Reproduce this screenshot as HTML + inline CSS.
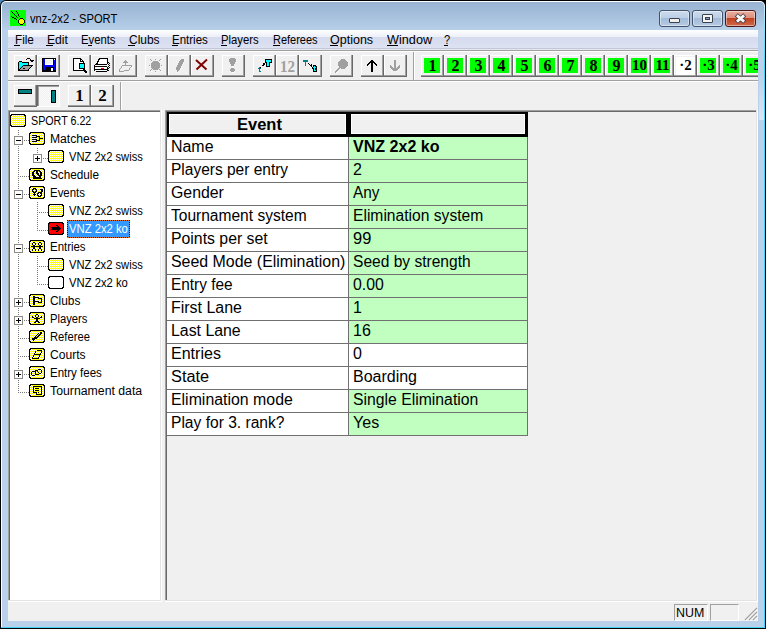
<!DOCTYPE html><html><head><meta charset="utf-8"><style>html,body{margin:0;padding:0;}body{width:766px;height:629px;overflow:hidden;position:relative;background:#000;font-family:"Liberation Sans",sans-serif;}div{box-sizing:border-box;}.btn{position:absolute;width:23px;height:22px;background:#f0f0f0;border-top:1px solid #fff;border-left:1px solid #fff;box-shadow:inset -1px -1px 0 #a0a0a0, 1px 1px 0 #696969;}</style></head><body>
<div style="position:absolute;left:0px;top:0px;width:6px;height:6px;background:#4d87b9;"></div>
<div style="position:absolute;left:0;top:0;width:766px;height:629px;border-radius:6px 6px 0 0;background:#000;overflow:hidden;"><div style="position:absolute;left:1px;top:1px;right:1px;bottom:1px;border-radius:5px 5px 0 0;background:#fff;"></div><div style="position:absolute;left:764px;top:5px;width:1px;bottom:1px;background:#44d4f6;"></div><div style="position:absolute;left:1px;top:627px;right:1px;height:1px;background:#44d4f6;"></div><div style="position:absolute;left:2px;top:2px;width:762px;height:625px;border-radius:4px 4px 0 0;background:linear-gradient(to bottom,#98b4d2 0px,#a6c0dd 14px,#b9d1ea 29px,#b9d1ea 100%);"></div></div>
<svg style="position:absolute;left:10px;top:10px" width="16" height="16" viewBox="0 0 16 16" shape-rendering="crispEdges"><rect width="16" height="16" fill="#00ff00"/><path d="M1 1h1v1h-1zM2 2h1v1h-1zM3 3h1v1h-1zM4 4h1v1h-1zM5 5h1v1h-1zM6 6h1v1h-1zM7 7h1v1h-1zM6 1h1v1h-1zM7 2h1v1h-1zM7 3h1v1h-1zM8 4h1v1h-1zM8 5h1v1h-1zM9 6h1v1h-1zM1 6h1v1h-1zM2 7h2v1h-2zM4 8h2v1h-2zM6 9h1v1h-1zM10 8h3v1h-3zM9 9h1v1h-1zM13 9h1v1h-1zM8 10h1v1h-1zM14 10h1v1h-1zM8 11h1v1h-1zM14 11h1v1h-1zM8 12h1v1h-1zM14 12h1v1h-1zM9 13h1v1h-1zM13 13h1v1h-1zM10 14h3v1h-3z" fill="#000"/><path d="M10 9h3v1h-3zM9 10h5v1h-5zM9 11h5v1h-5zM9 12h5v1h-5zM10 13h3v1h-3z" fill="#ffff00"/></svg>
<div style="position:absolute;left:30px;top:13px;white-space:pre;font-family:'Liberation Sans', sans-serif;font-size:12px;line-height:12px;color:#000;font-weight:normal;transform:scaleX(0.9306);transform-origin:0 0;">vnz-2x2 - SPORT</div>
<div style="position:absolute;left:659px;top:10px;width:31px;height:17px;border:1px solid #44536a;border-radius:3px;background:linear-gradient(to bottom,#cddcee 0%,#bccfe6 45%,#a3bcd9 50%,#b6cbe3 100%);box-shadow:inset 0 0 0 1px rgba(255,255,255,0.45);"></div>
<div style="position:absolute;left:692px;top:10px;width:31px;height:17px;border:1px solid #44536a;border-radius:3px;background:linear-gradient(to bottom,#cddcee 0%,#bccfe6 45%,#a3bcd9 50%,#b6cbe3 100%);box-shadow:inset 0 0 0 1px rgba(255,255,255,0.45);"></div>
<div style="position:absolute;left:725px;top:10px;width:31px;height:17px;border:1px solid #4d1616;border-radius:3px;background:linear-gradient(to bottom,#eaaf9f 0%,#dc9080 45%,#c2421f 50%,#cf6a4e 100%);box-shadow:inset 0 0 0 1px rgba(255,255,255,0.45);"></div>
<div style="position:absolute;left:669px;top:18px;width:11px;height:5px;background:#f0f0ea;border:1px solid #3a4250;border-radius:1px;"></div>
<div style="position:absolute;left:702px;top:14px;width:11px;height:9px;background:#f4f4f0;border:1px solid #3a4250;border-radius:1px;"></div>
<div style="position:absolute;left:705px;top:17px;width:5px;height:3px;background:#7f9bbf;border:1px solid #3a4250;"></div>
<svg style="position:absolute;left:733px;top:12px" width="15" height="13" viewBox="0 0 15 13"><path d="M3.3 2.9 L11.7 10.1 M11.7 2.9 L3.3 10.1" stroke="#3a3a44" stroke-width="4.4"/><path d="M3.9 3.4 L11.1 9.6 M11.1 3.4 L3.9 9.6" stroke="#f8f8f8" stroke-width="2.8"/></svg>
<div style="position:absolute;left:8px;top:30px;width:750px;height:591px;background:#f0f0f0;"></div>
<div style="position:absolute;left:8px;top:30px;width:750px;height:19px;background:linear-gradient(to bottom,#ffffff 0px,#f7f8fc 3px,#eceff8 7px,#d6dbee 7px,#d8ddef 12px,#dee3f4 18px);"></div>
<div style="position:absolute;left:8px;top:48px;width:750px;height:1px;background:#c2c7d9;"></div>
<div style="position:absolute;left:8px;top:49px;width:750px;height:1px;background:#e6e8ee;"></div>
<div style="position:absolute;left:8px;top:50px;width:750px;height:1px;background:#a0a0a0;"></div>
<div style="position:absolute;left:8px;top:51px;width:750px;height:1px;background:#fff;"></div>
<div style="position:absolute;left:14.5px;top:34px;white-space:pre;font-family:'Liberation Sans', sans-serif;font-size:12px;line-height:12px;color:#000;font-weight:normal;transform:scaleX(0.9771);transform-origin:0 0;">File</div>
<div style="position:absolute;left:14px;top:45px;width:6px;height:1px;background:#000;"></div>
<div style="position:absolute;left:46.5px;top:34px;white-space:pre;font-family:'Liberation Sans', sans-serif;font-size:12px;line-height:12px;color:#000;font-weight:normal;transform:scaleX(1.0103);transform-origin:0 0;">Edit</div>
<div style="position:absolute;left:46px;top:45px;width:7px;height:1px;background:#000;"></div>
<div style="position:absolute;left:80.7px;top:34px;white-space:pre;font-family:'Liberation Sans', sans-serif;font-size:12px;line-height:12px;color:#000;font-weight:normal;transform:scaleX(0.9404);transform-origin:0 0;">Events</div>
<div style="position:absolute;left:88px;top:45px;width:4px;height:1px;background:#000;"></div>
<div style="position:absolute;left:128.5px;top:34px;white-space:pre;font-family:'Liberation Sans', sans-serif;font-size:12px;line-height:12px;color:#000;font-weight:normal;transform:scaleX(0.9971);transform-origin:0 0;">Clubs</div>
<div style="position:absolute;left:128px;top:45px;width:7px;height:1px;background:#000;"></div>
<div style="position:absolute;left:172.3px;top:34px;white-space:pre;font-family:'Liberation Sans', sans-serif;font-size:12px;line-height:12px;color:#000;font-weight:normal;transform:scaleX(0.9583);transform-origin:0 0;">Entries</div>
<div style="position:absolute;left:172px;top:45px;width:6px;height:1px;background:#000;"></div>
<div style="position:absolute;left:221.4px;top:34px;white-space:pre;font-family:'Liberation Sans', sans-serif;font-size:12px;line-height:12px;color:#000;font-weight:normal;transform:scaleX(0.9396);transform-origin:0 0;">Players</div>
<div style="position:absolute;left:221px;top:45px;width:6px;height:1px;background:#000;"></div>
<div style="position:absolute;left:272.6px;top:34px;white-space:pre;font-family:'Liberation Sans', sans-serif;font-size:12px;line-height:12px;color:#000;font-weight:normal;transform:scaleX(0.9158);transform-origin:0 0;">Referees</div>
<div style="position:absolute;left:273px;top:45px;width:7px;height:1px;background:#000;"></div>
<div style="position:absolute;left:330.2px;top:34px;white-space:pre;font-family:'Liberation Sans', sans-serif;font-size:12px;line-height:12px;color:#000;font-weight:normal;transform:scaleX(1.0421);transform-origin:0 0;">Options</div>
<div style="position:absolute;left:330px;top:45px;width:8px;height:1px;background:#000;"></div>
<div style="position:absolute;left:387.2px;top:34px;white-space:pre;font-family:'Liberation Sans', sans-serif;font-size:12px;line-height:12px;color:#000;font-weight:normal;transform:scaleX(1.0565);transform-origin:0 0;">Window</div>
<div style="position:absolute;left:387px;top:45px;width:11px;height:1px;background:#000;"></div>
<div style="position:absolute;left:444.0px;top:34px;white-space:pre;font-family:'Liberation Sans', sans-serif;font-size:12px;line-height:12px;color:#000;font-weight:normal;transform:scaleX(0.9271);transform-origin:0 0;">?</div>
<div style="position:absolute;left:444px;top:45px;width:4px;height:1px;background:#000;"></div>
<div style="position:absolute;left:8px;top:80px;width:750px;height:1px;background:#a0a0a0;"></div>
<div style="position:absolute;left:8px;top:81px;width:750px;height:1px;background:#fff;"></div>
<div style="position:absolute;left:14px;top:55px;width:23px;height:22px;background:#f0f0f0;box-shadow:inset -1px -1px 0 #696969, inset -2px -2px 0 #a0a0a0, inset 1px 1px 0 #fff;"><svg style="position:absolute;left:0;top:0" width="23" height="22" viewBox="0 0 23 22" shape-rendering="crispEdges"><path d="M13 3h3v1h-3zM12 4h1v1h-1zM16 4h1v1h-1zM16 5h4v1h-4zM17 6h2v1h-2zM5 6h3v1h-3zM4 7h1v1h-1zM8 7h7v1h-7zM4 8h1v1h-1zM14 8h1v1h-1zM4 9h1v1h-1zM14 9h1v1h-1zM4 10h1v1h-1zM9 10h10v1h-10zM4 11h1v1h-1zM8 11h1v1h-1zM17 11h1v1h-1zM4 12h1v1h-1zM7 12h1v1h-1zM16 12h1v1h-1zM4 13h1v1h-1zM6 13h1v1h-1zM9 13h2v1h-2zM15 13h1v1h-1zM4 14h2v1h-2zM14 14h1v1h-1zM4 15h11v1h-11z" fill="#000"/><path d="M5 7h3v1h-3zM5 8h9v1h-9zM5 9h9v1h-9zM5 10h4v1h-4zM5 11h3v1h-3zM5 12h2v1h-2zM5 13h1v1h-1z" fill="#00ffff"/><path d="M9 11h8v1h-8zM8 12h8v1h-8zM7 13h2v1h-2zM11 13h4v1h-4zM6 14h8v1h-8z" fill="#a0a0a0"/></svg></div>
<div style="position:absolute;left:37px;top:55px;width:23px;height:22px;background:#f0f0f0;box-shadow:inset -1px -1px 0 #696969, inset -2px -2px 0 #a0a0a0, inset 1px 1px 0 #fff;"><svg style="position:absolute;left:0;top:0" width="23" height="22" viewBox="0 0 23 22" shape-rendering="crispEdges"><path d="M5 3h14v14H5z" fill="#000"/><path d="M6 4h2v11H6zM17 5h1v10h-1zM8 10h9v2H8z" fill="#0000ff"/><path d="M8 4h8v6H8z" fill="#fff"/><path d="M9 5h6v4H9z" fill="#f0f0f0"/><path d="M14 13h2v3h-2z" fill="#fff"/><path d="M17 4h1v1h-1z" fill="#fff"/></svg></div>
<div style="position:absolute;left:68px;top:55px;width:23px;height:22px;background:#f0f0f0;box-shadow:inset -1px -1px 0 #696969, inset -2px -2px 0 #a0a0a0, inset 1px 1px 0 #fff;"><svg style="position:absolute;left:0;top:0" width="23" height="22" viewBox="0 0 23 22" shape-rendering="crispEdges"><path d="M5 3h8v1h1v1h1v1h1v10H5z" fill="#000"/><path d="M6 4h7v1h1v1h1v9H6z" fill="#fff"/><path d="M12 4h1v2h2v1h-3z" fill="#000"/><path d="M11 8h6v6h-6z" fill="#000"/><path d="M12 9h4v4h-4z" fill="#00ffff"/><path d="M16 14h1v1h1v1h1v2h-2v-1h-1z" fill="#000"/></svg></div>
<div style="position:absolute;left:91px;top:55px;width:23px;height:22px;background:#f0f0f0;box-shadow:inset -1px -1px 0 #696969, inset -2px -2px 0 #a0a0a0, inset 1px 1px 0 #fff;"><svg style="position:absolute;left:0;top:0" width="23" height="22" viewBox="0 0 23 22" shape-rendering="crispEdges"><path d="M8 3h9v5h-1V4H9v1H8v2H7v2H6v1H5V8h1V6h1V4h1z" fill="#000"/><path d="M9 4h7v5H7V7h1V5h1z" fill="#fff"/><path d="M4 9h12v1H4zM3 10h1v6H3zM4 11h12v1H4zM4 14h12v1H4zM5 16h11v1H5zM16 12h1v4h-1z" fill="#000"/><path d="M4 10h12v1H4zM4 12h12v2H4zM5 15h11v1H5z" fill="#fff"/><path d="M10 13h3v1h-3z" fill="#ff0000"/><path d="M17 7h1v1h-1zM18 8h1v1h-1zM17 9h1v1h-1zM18 10h1v1h-1zM17 11h1v1h-1zM18 12h1v1h-1zM17 13h1v1h-1zM16 15h1v1h-1zM17 15h1v1h-1zM16 8h1v1h-1z" fill="#000"/></svg></div>
<div style="position:absolute;left:114px;top:55px;width:23px;height:22px;background:#f0f0f0;box-shadow:inset -1px -1px 0 #696969, inset -2px -2px 0 #a0a0a0, inset 1px 1px 0 #fff;"><svg style="position:absolute;left:0;top:0" width="23" height="22" viewBox="0 0 23 22" shape-rendering="crispEdges"><path d="M11 5h1v5h-1zM10 6h3v1h-3zM9 7h5v1H9z" fill="#a0a0a0"/><path d="M8 10h10v2h-1v1h-1v2h-1v1h-5v1H5v-3h1v-1h1v-2h1z" fill="#a0a0a0"/><path d="M8 11h9v1h-1v1h-1v2h-5v1H6v-2h1v-1h1z" fill="#f0f0f0"/><path d="M18 12h1v1h-1zM10 17h1v1h-1zM15 16h1v1h-1z" fill="#fff"/></svg></div>
<div style="position:absolute;left:145px;top:55px;width:23px;height:22px;background:#f0f0f0;box-shadow:inset -1px -1px 0 #696969, inset -2px -2px 0 #a0a0a0, inset 1px 1px 0 #fff;"><svg style="position:absolute;left:0;top:0" width="23" height="22" viewBox="0 0 23 22" shape-rendering="crispEdges"><path d="M8 6h5v1h-5zM7 7h7v1h-7zM6 8h9v1h-9zM6 9h9v1h-9zM6 10h9v1h-9zM6 11h9v1h-9zM6 12h9v1h-9zM7 13h7v1h-7zM8 14h5v1h-5zM10 4h1v1h-1zM4 10h1v1h-1zM16 10h1v1h-1zM10 16h1v1h-1zM5 4h1v1h-1zM6 5h1v1h-1zM15 4h1v1h-1zM14 5h1v1h-1zM5 15h1v1h-1zM6 14h1v1h-1zM15 15h1v1h-1zM14 14h1v1h-1z" fill="#a0a0a0"/><path d="M11 5h1v1h-1zM5 11h1v1h-1zM17 11h1v1h-1zM11 17h1v1h-1zM13 15h1v1h-1zM15 13h1v1h-1zM6 16h1v1h-1zM16 16h1v1h-1zM16 5h1v1h-1z" fill="#fff"/></svg></div>
<div style="position:absolute;left:168px;top:55px;width:23px;height:22px;background:#f0f0f0;box-shadow:inset -1px -1px 0 #696969, inset -2px -2px 0 #a0a0a0, inset 1px 1px 0 #fff;"><svg style="position:absolute;left:0;top:0" width="23" height="22" viewBox="0 0 23 22" shape-rendering="crispEdges"><path d="M13 4h3v1h-3zM12 5h4v1h-4zM11 6h5v1h-5zM11 7h4v1h-4zM10 8h5v1h-5zM10 9h4v1h-4zM9 10h5v1h-5zM9 11h4v1h-4zM8 12h5v1h-5zM8 13h4v1h-4zM8 14h4v1h-4zM9 15h2v1h-2zM9 16h1v1h-1z" fill="#a0a0a0"/><path d="M16 5h1v1h-1zM15 8h1v1h-1zM13 11h1v1h-1zM12 14h1v1h-1zM9 17h1v1h-1z" fill="#fff"/></svg></div>
<div style="position:absolute;left:191px;top:55px;width:23px;height:22px;background:#f0f0f0;box-shadow:inset -1px -1px 0 #696969, inset -2px -2px 0 #a0a0a0, inset 1px 1px 0 #fff;"><svg style="position:absolute;left:0;top:0" width="23" height="22" viewBox="0 0 23 22"><path d="M5 5L15.5 14.5M16 4.5L5.5 14.5" stroke="#800000" stroke-width="1.9"/></svg></div>
<div style="position:absolute;left:222px;top:55px;width:23px;height:22px;background:#f0f0f0;box-shadow:inset -1px -1px 0 #696969, inset -2px -2px 0 #a0a0a0, inset 1px 1px 0 #fff;"><svg style="position:absolute;left:0;top:0" width="23" height="22" viewBox="0 0 23 22" shape-rendering="crispEdges"><path d="M8 3h5v1h-5zM7 4h7v1h-7zM7 5h7v1h-7zM7 6h7v1h-7zM8 7h5v1h-5zM8 8h5v1h-5zM9 9h3v1h-3zM9 10h3v1h-3zM9 13h3v1h-3zM8 14h5v1h-5zM8 15h5v1h-5zM9 16h3v1h-3z" fill="#a0a0a0"/><path d="M10 11h2v1h-2zM10 17h2v1h-2zM14 5h1v1h-1z" fill="#fff"/></svg></div>
<div style="position:absolute;left:253px;top:55px;width:23px;height:22px;background:#f0f0f0;box-shadow:inset -1px -1px 0 #696969, inset -2px -2px 0 #a0a0a0, inset 1px 1px 0 #fff;"><svg style="position:absolute;left:0;top:0" width="23" height="22" viewBox="0 0 23 22" shape-rendering="crispEdges"><path d="M12 4h7v1h-7zM12 5h1v1h-1zM18 5h1v1h-1zM12 6h1v1h-1zM18 6h1v1h-1zM12 7h2v1h-2zM16 7h3v1h-3zM13 8h1v1h-1zM16 8h1v1h-1zM13 9h1v1h-1zM16 9h1v1h-1zM13 10h1v1h-1zM16 10h1v1h-1zM13 11h4v1h-4zM10 8h2v1h-2zM10 9h2v1h-2zM10 10h1v1h-1zM9 10h1v1h-1zM7 12h1v1h-1z" fill="#000"/><path d="M13 5h5v1h-5zM13 6h5v1h-5zM14 7h2v1h-2zM14 8h2v1h-2zM14 9h2v1h-2zM14 10h2v1h-2z" fill="#00ffff"/><path d="M6 12h1v1h-1zM5 13h3v1h-3zM6 14h1v1h-1zM6 15h1v1h-1zM6 16h2v1h-2z" fill="#008080"/></svg></div>
<div style="position:absolute;left:276px;top:55px;width:23px;height:22px;background:#f0f0f0;box-shadow:inset -1px -1px 0 #696969, inset -2px -2px 0 #a0a0a0, inset 1px 1px 0 #fff;"><svg style="position:absolute;left:0;top:0" width="23" height="22" viewBox="0 0 23 22"><text x="19" y="17" font-family="Liberation Serif" font-size="16.5" font-weight="bold" fill="#a0a0a0" text-anchor="end" textLength="15" lengthAdjust="spacingAndGlyphs">12</text></svg></div>
<div style="position:absolute;left:299px;top:55px;width:23px;height:22px;background:#f0f0f0;box-shadow:inset -1px -1px 0 #696969, inset -2px -2px 0 #a0a0a0, inset 1px 1px 0 #fff;"><svg style="position:absolute;left:0;top:0" width="23" height="22" viewBox="0 0 23 22" shape-rendering="crispEdges"><path d="M4 5h5v1h-5zM4 6h5v1h-5zM6 7h1v1h-1zM6 8h1v1h-1zM6 9h1v1h-1zM6 10h1v1h-1z" fill="#008080"/><path d="M9 8h1v1h-1zM10 9h1v1h-1zM11 10h2v1h-2zM12 11h1v1h-1zM12 9h1v1h-1zM14 10h3v1h-3zM14 11h1v1h-1zM16 11h2v1h-2zM13 12h1v1h-1zM17 12h1v1h-1zM13 13h2v1h-2zM16 13h2v1h-2zM14 14h1v1h-1zM16 14h2v1h-2zM14 15h1v1h-1zM17 15h1v1h-1zM14 16h4v1h-4z" fill="#000"/><path d="M15 11h1v1h-1zM14 12h3v1h-3zM15 13h1v1h-1zM15 14h1v1h-1zM15 15h2v1h-2z" fill="#00ffff"/></svg></div>
<div style="position:absolute;left:330px;top:55px;width:23px;height:22px;background:#f0f0f0;box-shadow:inset -1px -1px 0 #696969, inset -2px -2px 0 #a0a0a0, inset 1px 1px 0 #fff;"><svg style="position:absolute;left:0;top:0" width="23" height="22" viewBox="0 0 23 22" shape-rendering="crispEdges"><path d="M11 4h4v1h1v1h1v1h1v4h-1v1h-1v1h-1v1h-4v-1h-1v-1H9v-1H8V7h1V6h1V5h1z" fill="#a0a0a0"/><path d="M9 12h1v1h-1zM8 13h2v1H8zM7 14h2v1H7zM6 15h2v1H6zM5 16h2v1H5zM5 17h1v1H5zM9 11h1v1H9z" fill="#a0a0a0"/><path d="M6 17h1v1H6z" fill="#fff"/></svg></div>
<div style="position:absolute;left:361px;top:55px;width:23px;height:22px;background:#f0f0f0;box-shadow:inset -1px -1px 0 #696969, inset -2px -2px 0 #a0a0a0, inset 1px 1px 0 #fff;"><svg style="position:absolute;left:0;top:0" width="23" height="22" viewBox="0 0 23 22" shape-rendering="crispEdges"><path d="M10 5h2v12h-2z" fill="#000"/><path d="M9 6h4v1H9zM8 7h2v1H8zM12 7h2v1h-2zM7 8h2v1H7zM13 8h2v1h-2zM6 9h2v1H6zM14 9h2v1h-2zM6 10h1v1H6zM15 10h1v1h-1z" fill="#000"/></svg></div>
<div style="position:absolute;left:384px;top:55px;width:23px;height:22px;background:#f0f0f0;box-shadow:inset -1px -1px 0 #696969, inset -2px -2px 0 #a0a0a0, inset 1px 1px 0 #fff;"><svg style="position:absolute;left:0;top:0" width="23" height="22" viewBox="0 0 23 22" shape-rendering="crispEdges"><path d="M10 5h2v11h-2z" fill="#a0a0a0"/><path d="M9 15h4v1H9zM8 14h6v1H8zM7 13h3v1H7zM12 13h3v1h-3zM6 12h3v1H6zM13 12h3v1h-3zM6 11h2v1H6zM14 11h2v1h-2zM6 10h1v1H6zM15 10h1v1h-1z" fill="#a0a0a0"/><path d="M12 16h1v1h-1zM16 12h1v1h-1z" fill="#fff"/></svg></div>
<div style="position:absolute;left:413px;top:52px;width:1px;height:28px;background:#a0a0a0;"></div>
<div style="position:absolute;left:414px;top:52px;width:1px;height:28px;background:#fff;"></div>
<div style="position:absolute;left:421px;top:55px;width:23px;height:22px;background:#f0f0f0;box-shadow:inset -1px -1px 0 #696969, inset -2px -2px 0 #a0a0a0, inset 1px 1px 0 #fff;"><div style="position:absolute;left:3px;top:3px;width:16px;height:15px;background:#00ff00;"></div><div style="position:absolute;left:0;top:3px;width:23px;text-align:center;font-family:'Liberation Serif', serif;font-size:16px;line-height:15px;font-weight:bold;color:#000;">1</div></div>
<div style="position:absolute;left:444px;top:55px;width:23px;height:22px;background:#f0f0f0;box-shadow:inset -1px -1px 0 #696969, inset -2px -2px 0 #a0a0a0, inset 1px 1px 0 #fff;"><div style="position:absolute;left:3px;top:3px;width:16px;height:15px;background:#00ff00;"></div><div style="position:absolute;left:0;top:3px;width:23px;text-align:center;font-family:'Liberation Serif', serif;font-size:16px;line-height:15px;font-weight:bold;color:#000;">2</div></div>
<div style="position:absolute;left:467px;top:55px;width:23px;height:22px;background:#f0f0f0;box-shadow:inset -1px -1px 0 #696969, inset -2px -2px 0 #a0a0a0, inset 1px 1px 0 #fff;"><div style="position:absolute;left:3px;top:3px;width:16px;height:15px;background:#00ff00;"></div><div style="position:absolute;left:0;top:3px;width:23px;text-align:center;font-family:'Liberation Serif', serif;font-size:16px;line-height:15px;font-weight:bold;color:#000;">3</div></div>
<div style="position:absolute;left:490px;top:55px;width:23px;height:22px;background:#f0f0f0;box-shadow:inset -1px -1px 0 #696969, inset -2px -2px 0 #a0a0a0, inset 1px 1px 0 #fff;"><div style="position:absolute;left:3px;top:3px;width:16px;height:15px;background:#00ff00;"></div><div style="position:absolute;left:0;top:3px;width:23px;text-align:center;font-family:'Liberation Serif', serif;font-size:16px;line-height:15px;font-weight:bold;color:#000;">4</div></div>
<div style="position:absolute;left:513px;top:55px;width:23px;height:22px;background:#f0f0f0;box-shadow:inset -1px -1px 0 #696969, inset -2px -2px 0 #a0a0a0, inset 1px 1px 0 #fff;"><div style="position:absolute;left:3px;top:3px;width:16px;height:15px;background:#00ff00;"></div><div style="position:absolute;left:0;top:3px;width:23px;text-align:center;font-family:'Liberation Serif', serif;font-size:16px;line-height:15px;font-weight:bold;color:#000;">5</div></div>
<div style="position:absolute;left:536px;top:55px;width:23px;height:22px;background:#f0f0f0;box-shadow:inset -1px -1px 0 #696969, inset -2px -2px 0 #a0a0a0, inset 1px 1px 0 #fff;"><div style="position:absolute;left:3px;top:3px;width:16px;height:15px;background:#00ff00;"></div><div style="position:absolute;left:0;top:3px;width:23px;text-align:center;font-family:'Liberation Serif', serif;font-size:16px;line-height:15px;font-weight:bold;color:#000;">6</div></div>
<div style="position:absolute;left:559px;top:55px;width:23px;height:22px;background:#f0f0f0;box-shadow:inset -1px -1px 0 #696969, inset -2px -2px 0 #a0a0a0, inset 1px 1px 0 #fff;"><div style="position:absolute;left:3px;top:3px;width:16px;height:15px;background:#00ff00;"></div><div style="position:absolute;left:0;top:3px;width:23px;text-align:center;font-family:'Liberation Serif', serif;font-size:16px;line-height:15px;font-weight:bold;color:#000;">7</div></div>
<div style="position:absolute;left:582px;top:55px;width:23px;height:22px;background:#f0f0f0;box-shadow:inset -1px -1px 0 #696969, inset -2px -2px 0 #a0a0a0, inset 1px 1px 0 #fff;"><div style="position:absolute;left:3px;top:3px;width:16px;height:15px;background:#00ff00;"></div><div style="position:absolute;left:0;top:3px;width:23px;text-align:center;font-family:'Liberation Serif', serif;font-size:16px;line-height:15px;font-weight:bold;color:#000;">8</div></div>
<div style="position:absolute;left:605px;top:55px;width:23px;height:22px;background:#f0f0f0;box-shadow:inset -1px -1px 0 #696969, inset -2px -2px 0 #a0a0a0, inset 1px 1px 0 #fff;"><div style="position:absolute;left:3px;top:3px;width:16px;height:15px;background:#00ff00;"></div><div style="position:absolute;left:0;top:3px;width:23px;text-align:center;font-family:'Liberation Serif', serif;font-size:16px;line-height:15px;font-weight:bold;color:#000;">9</div></div>
<div style="position:absolute;left:628px;top:55px;width:23px;height:22px;background:#f0f0f0;box-shadow:inset -1px -1px 0 #696969, inset -2px -2px 0 #a0a0a0, inset 1px 1px 0 #fff;"><div style="position:absolute;left:3px;top:3px;width:16px;height:15px;background:#00ff00;"></div><div style="position:absolute;left:0;top:3px;width:23px;text-align:center;font-family:'Liberation Serif', serif;font-size:15px;line-height:15px;font-weight:bold;color:#000;">10</div></div>
<div style="position:absolute;left:651px;top:55px;width:23px;height:22px;background:#f0f0f0;box-shadow:inset -1px -1px 0 #696969, inset -2px -2px 0 #a0a0a0, inset 1px 1px 0 #fff;"><div style="position:absolute;left:3px;top:3px;width:16px;height:15px;background:#00ff00;"></div><div style="position:absolute;left:0;top:3px;width:23px;text-align:center;font-family:'Liberation Serif', serif;font-size:15px;line-height:15px;font-weight:bold;color:#000;">11</div></div>
<div style="position:absolute;left:674px;top:55px;width:23px;height:22px;background:#f0f0f0;box-shadow:inset -1px -1px 0 #696969, inset -2px -2px 0 #a0a0a0, inset 1px 1px 0 #fff;"><div style="position:absolute;left:2px;top:2px;width:19px;height:18px;background:#fff;"></div><div style="position:absolute;left:0;top:3px;width:23px;text-align:center;font-family:'Liberation Serif', serif;font-size:15px;line-height:15px;font-weight:bold;color:#000;">·2</div></div>
<div style="position:absolute;left:697px;top:55px;width:23px;height:22px;background:#f0f0f0;box-shadow:inset -1px -1px 0 #696969, inset -2px -2px 0 #a0a0a0, inset 1px 1px 0 #fff;"><div style="position:absolute;left:3px;top:3px;width:16px;height:15px;background:#00ff00;"></div><div style="position:absolute;left:0;top:3px;width:23px;text-align:center;font-family:'Liberation Serif', serif;font-size:15px;line-height:15px;font-weight:bold;color:#000;">·3</div></div>
<div style="position:absolute;left:720px;top:55px;width:23px;height:22px;background:#f0f0f0;box-shadow:inset -1px -1px 0 #696969, inset -2px -2px 0 #a0a0a0, inset 1px 1px 0 #fff;"><div style="position:absolute;left:3px;top:3px;width:16px;height:15px;background:#00ff00;"></div><div style="position:absolute;left:0;top:3px;width:23px;text-align:center;font-family:'Liberation Serif', serif;font-size:15px;line-height:15px;font-weight:bold;color:#000;">·4</div></div>
<div style="position:absolute;left:743px;top:55px;width:23px;height:22px;background:#f0f0f0;box-shadow:inset -1px -1px 0 #696969, inset -2px -2px 0 #a0a0a0, inset 1px 1px 0 #fff;"><div style="position:absolute;left:3px;top:3px;width:16px;height:15px;background:#00ff00;"></div><div style="position:absolute;left:0;top:3px;width:23px;text-align:center;font-family:'Liberation Serif', serif;font-size:15px;line-height:15px;font-weight:bold;color:#000;">·5</div></div>
<div style="position:absolute;left:14px;top:85px;width:23px;height:22px;background:#f0f0f0;box-shadow:inset -1px -1px 0 #696969, inset -2px -2px 0 #a0a0a0, inset 1px 1px 0 #fff;"><div style="position:absolute;left:4px;top:4px;width:14px;height:5px;background:#008080;border:1px solid #000;"></div></div>
<div style="position:absolute;left:37px;top:85px;width:23px;height:22px;background-color:#fbfbfb;background-image:linear-gradient(45deg,#f0f0f0 25%,transparent 25%,transparent 75%,#f0f0f0 75%),linear-gradient(45deg,#f0f0f0 25%,transparent 25%,transparent 75%,#f0f0f0 75%);background-size:2px 2px;background-position:0 0,1px 1px;box-shadow:inset -1px -1px 0 #fff, inset 1px 1px 0 #696969, inset 2px 2px 0 #a0a0a0;"><div style="position:absolute;left:14px;top:5px;width:5px;height:13px;background:#008080;border:1px solid #000;"></div></div>
<div style="position:absolute;left:68px;top:85px;width:23px;height:22px;background:#f0f0f0;box-shadow:inset -1px -1px 0 #696969, inset -2px -2px 0 #a0a0a0, inset 1px 1px 0 #fff;"><div style="position:absolute;left:0;top:4px;width:23px;text-align:center;font-family:'Liberation Serif', serif;font-size:17px;line-height:14px;font-weight:bold;color:#000;">1</div></div>
<div style="position:absolute;left:91px;top:85px;width:23px;height:22px;background:#f0f0f0;box-shadow:inset -1px -1px 0 #696969, inset -2px -2px 0 #a0a0a0, inset 1px 1px 0 #fff;"><div style="position:absolute;left:0;top:4px;width:23px;text-align:center;font-family:'Liberation Serif', serif;font-size:17px;line-height:14px;font-weight:bold;color:#000;">2</div></div>
<div style="position:absolute;left:120px;top:82px;width:1px;height:28px;background:#a0a0a0;"></div>
<div style="position:absolute;left:121px;top:82px;width:1px;height:28px;background:#fff;"></div>
<div style="position:absolute;left:8px;top:110px;width:154px;height:492px;background:#fff;box-shadow:inset -1px -1px 0 #fff, inset -2px -2px 0 #e3e3e3, inset 1px 1px 0 #a0a0a0, inset 2px 2px 0 #696969;"></div>
<div style="position:absolute;left:165px;top:110px;width:593px;height:492px;background:#f0f0f0;box-shadow:inset -1px -1px 0 #fff, inset -2px -2px 0 #e3e3e3, inset 1px 1px 0 #a0a0a0, inset 2px 2px 0 #696969;"></div>
<div style="position:absolute;left:674px;top:604px;width:34px;height:17px;border-top:1px solid #a0a0a0;border-left:1px solid #a0a0a0;border-right:1px solid #fff;border-bottom:1px solid #fff;"></div>
<div style="position:absolute;left:676px;top:607px;white-space:pre;font-family:'Liberation Sans', sans-serif;font-size:12px;line-height:12px;color:#000;font-weight:normal;transform:scaleX(1.0356);transform-origin:0 0;">NUM</div>
<div style="position:absolute;left:710px;top:604px;width:29px;height:17px;border-top:1px solid #a0a0a0;border-left:1px solid #a0a0a0;border-right:1px solid #fff;border-bottom:1px solid #fff;"></div>
<svg style="position:absolute;left:744px;top:607px" width="14" height="14" viewBox="0 0 14 14"><path d="M13 1L1 13M13 5L5 13M13 9L9 13" stroke="#a0a0a0" stroke-width="1.2"/><path d="M13.8 1.8L1.8 13.8M13.8 5.8L5.8 13.8M13.8 9.8L9.8 13.8" stroke="#fff" stroke-width="0.8"/></svg>
<svg width="0" height="0" style="position:absolute"><defs><pattern id="dith" width="2" height="2" patternUnits="userSpaceOnUse"><rect width="2" height="2" fill="#fff"/><rect width="1" height="1" fill="#ff0"/><rect x="1" y="1" width="1" height="1" fill="#ff0"/></pattern></defs></svg>
<div style="position:absolute;left:18px;top:130px;width:1px;height:263px;background-image:linear-gradient(to bottom,#7a7a7a 50%,transparent 50%);background-size:1px 2px;"></div><div style="position:absolute;left:37px;top:148px;width:1px;height:11px;background-image:linear-gradient(to bottom,#7a7a7a 50%,transparent 50%);background-size:1px 2px;"></div><div style="position:absolute;left:37px;top:202px;width:1px;height:29px;background-image:linear-gradient(to bottom,#7a7a7a 50%,transparent 50%);background-size:1px 2px;"></div><div style="position:absolute;left:37px;top:256px;width:1px;height:29px;background-image:linear-gradient(to bottom,#7a7a7a 50%,transparent 50%);background-size:1px 2px;"></div><svg style="position:absolute;left:10px;top:114px" width="16" height="13" viewBox="0 0 16 13" shape-rendering="crispEdges"><path d="M2 1h12v1h-12zM1 2h14v1h-14zM1 3h14v1h-14zM1 4h14v1h-14zM1 5h14v1h-14zM1 6h14v1h-14zM1 7h14v1h-14zM1 8h14v1h-14zM1 9h14v1h-14zM1 10h14v1h-14zM2 11h12v1h-12z" fill="url(#dith)"/><path d="M1 0h14v1h-14zM0 1h2v1h-2zM14 1h2v1h-2zM0 2h1v1h-1zM15 2h1v1h-1zM0 3h1v1h-1zM15 3h1v1h-1zM0 4h1v1h-1zM15 4h1v1h-1zM0 5h1v1h-1zM15 5h1v1h-1zM0 6h1v1h-1zM15 6h1v1h-1zM0 7h1v1h-1zM15 7h1v1h-1zM0 8h1v1h-1zM15 8h1v1h-1zM0 9h1v1h-1zM15 9h1v1h-1zM0 10h1v1h-1zM15 10h1v1h-1zM0 11h2v1h-2zM14 11h2v1h-2zM1 12h14v1h-14z" fill="#000000"/></svg><div style="position:absolute;left:31px;top:115px;white-space:pre;font-family:'Liberation Sans', sans-serif;font-size:12px;line-height:12px;color:#000;font-weight:normal;transform:scaleX(0.8921);transform-origin:0 0;">SPORT 6.22</div><div style="position:absolute;left:18px;top:140px;width:11px;height:1px;background-image:linear-gradient(to right,#7a7a7a 50%,transparent 50%);background-size:2px 1px;"></div><div style="position:absolute;left:14px;top:136px;width:9px;height:9px;border:1px solid #8a8a8a;background:#fff;"></div><div style="position:absolute;left:16px;top:140px;width:5px;height:1px;background:#000;"></div><svg style="position:absolute;left:29px;top:132px" width="16" height="13" viewBox="0 0 16 13" shape-rendering="crispEdges"><path d="M2 1h12v1h-12zM1 2h14v1h-14zM1 3h2v1h-2zM8 3h7v1h-7zM1 4h6v1h-6zM11 4h4v1h-4zM1 5h2v1h-2zM11 5h4v1h-4zM1 6h7v1h-7zM14 6h1v1h-1zM1 7h2v1h-2zM11 7h4v1h-4zM1 8h6v1h-6zM11 8h4v1h-4zM1 9h2v1h-2zM8 9h7v1h-7zM1 10h14v1h-14zM2 11h12v1h-12z" fill="url(#dith)"/><path d="M8 5h2v1h-2zM8 6h2v1h-2zM8 7h2v1h-2z" fill="#ffff00"/><path d="M1 0h14v1h-14zM0 1h2v1h-2zM14 1h2v1h-2zM0 2h1v1h-1zM15 2h1v1h-1zM0 3h1v1h-1zM3 3h5v1h-5zM15 3h1v1h-1zM0 4h1v1h-1zM7 4h4v1h-4zM15 4h1v1h-1zM0 5h1v1h-1zM3 5h5v1h-5zM10 5h1v1h-1zM15 5h1v1h-1zM0 6h1v1h-1zM10 6h4v1h-4zM15 6h1v1h-1zM0 7h1v1h-1zM3 7h5v1h-5zM10 7h1v1h-1zM15 7h1v1h-1zM0 8h1v1h-1zM7 8h4v1h-4zM15 8h1v1h-1zM0 9h1v1h-1zM3 9h5v1h-5zM15 9h1v1h-1zM0 10h1v1h-1zM15 10h1v1h-1zM0 11h2v1h-2zM14 11h2v1h-2zM1 12h14v1h-14z" fill="#000000"/></svg><div style="position:absolute;left:50px;top:133px;white-space:pre;font-family:'Liberation Sans', sans-serif;font-size:12px;line-height:12px;color:#000;font-weight:normal;transform:scaleX(1.0119);transform-origin:0 0;">Matches</div><div style="position:absolute;left:37px;top:158px;width:11px;height:1px;background-image:linear-gradient(to right,#7a7a7a 50%,transparent 50%);background-size:2px 1px;"></div><div style="position:absolute;left:33px;top:154px;width:9px;height:9px;border:1px solid #8a8a8a;background:#fff;"></div><div style="position:absolute;left:35px;top:158px;width:5px;height:1px;background:#000;"></div><div style="position:absolute;left:37px;top:156px;width:1px;height:5px;background:#000;"></div><svg style="position:absolute;left:48px;top:150px" width="16" height="13" viewBox="0 0 16 13" shape-rendering="crispEdges"><path d="M2 1h12v1h-12zM1 2h14v1h-14zM1 3h14v1h-14zM1 4h14v1h-14zM1 5h14v1h-14zM1 6h14v1h-14zM1 7h14v1h-14zM1 8h14v1h-14zM1 9h14v1h-14zM1 10h14v1h-14zM2 11h12v1h-12z" fill="url(#dith)"/><path d="M1 0h14v1h-14zM0 1h2v1h-2zM14 1h2v1h-2zM0 2h1v1h-1zM15 2h1v1h-1zM0 3h1v1h-1zM15 3h1v1h-1zM0 4h1v1h-1zM15 4h1v1h-1zM0 5h1v1h-1zM15 5h1v1h-1zM0 6h1v1h-1zM15 6h1v1h-1zM0 7h1v1h-1zM15 7h1v1h-1zM0 8h1v1h-1zM15 8h1v1h-1zM0 9h1v1h-1zM15 9h1v1h-1zM0 10h1v1h-1zM15 10h1v1h-1zM0 11h2v1h-2zM14 11h2v1h-2zM1 12h14v1h-14z" fill="#000000"/></svg><div style="position:absolute;left:69px;top:151px;white-space:pre;font-family:'Liberation Sans', sans-serif;font-size:12px;line-height:12px;color:#000;font-weight:normal;transform:scaleX(0.9299);transform-origin:0 0;">VNZ 2x2 swiss</div><div style="position:absolute;left:18px;top:176px;width:11px;height:1px;background-image:linear-gradient(to right,#7a7a7a 50%,transparent 50%);background-size:2px 1px;"></div><svg style="position:absolute;left:29px;top:168px" width="16" height="13" viewBox="0 0 16 13" shape-rendering="crispEdges"><path d="M2 1h12v1h-12zM1 2h4v1h-4zM11 2h4v1h-4zM1 3h3v1h-3zM6 3h1v1h-1zM9 3h1v1h-1zM12 3h3v1h-3zM1 4h2v1h-2zM5 4h2v1h-2zM9 4h2v1h-2zM13 4h2v1h-2zM1 5h2v1h-2zM5 5h2v1h-2zM10 5h1v1h-1zM13 5h2v1h-2zM1 6h2v1h-2zM5 6h3v1h-3zM10 6h1v1h-1zM13 6h2v1h-2zM1 7h2v1h-2zM6 7h3v1h-3zM13 7h2v1h-2zM1 8h3v1h-3zM7 8h3v1h-3zM12 8h3v1h-3zM1 9h3v1h-3zM12 9h3v1h-3zM1 10h3v1h-3zM13 10h2v1h-2zM2 11h12v1h-12z" fill="url(#dith)"/><path d="M1 0h14v1h-14zM0 1h2v1h-2zM14 1h2v1h-2zM0 2h1v1h-1zM5 2h6v1h-6zM15 2h1v1h-1zM0 3h1v1h-1zM4 3h2v1h-2zM7 3h2v1h-2zM10 3h2v1h-2zM15 3h1v1h-1zM0 4h1v1h-1zM3 4h2v1h-2zM7 4h2v1h-2zM11 4h2v1h-2zM15 4h1v1h-1zM0 5h1v1h-1zM3 5h2v1h-2zM7 5h3v1h-3zM11 5h2v1h-2zM15 5h1v1h-1zM0 6h1v1h-1zM3 6h2v1h-2zM8 6h2v1h-2zM11 6h2v1h-2zM15 6h1v1h-1zM0 7h1v1h-1zM3 7h3v1h-3zM9 7h4v1h-4zM15 7h1v1h-1zM0 8h1v1h-1zM4 8h3v1h-3zM10 8h2v1h-2zM15 8h1v1h-1zM0 9h1v1h-1zM4 9h8v1h-8zM15 9h1v1h-1zM0 10h1v1h-1zM4 10h9v1h-9zM15 10h1v1h-1zM0 11h2v1h-2zM14 11h2v1h-2zM1 12h14v1h-14z" fill="#000000"/></svg><div style="position:absolute;left:50px;top:169px;white-space:pre;font-family:'Liberation Sans', sans-serif;font-size:12px;line-height:12px;color:#000;font-weight:normal;transform:scaleX(0.9791);transform-origin:0 0;">Schedule</div><div style="position:absolute;left:18px;top:194px;width:11px;height:1px;background-image:linear-gradient(to right,#7a7a7a 50%,transparent 50%);background-size:2px 1px;"></div><div style="position:absolute;left:14px;top:190px;width:9px;height:9px;border:1px solid #8a8a8a;background:#fff;"></div><div style="position:absolute;left:16px;top:194px;width:5px;height:1px;background:#000;"></div><svg style="position:absolute;left:29px;top:186px" width="16" height="13" viewBox="0 0 16 13" shape-rendering="crispEdges"><path d="M2 1h12v1h-12zM1 2h3v1h-3zM7 2h8v1h-8zM1 3h2v1h-2zM5 3h1v1h-1zM8 3h3v1h-3zM14 3h1v1h-1zM1 4h2v1h-2zM4 4h3v1h-3zM8 4h4v1h-4zM14 4h1v1h-1zM1 5h2v1h-2zM5 5h1v1h-1zM8 5h4v1h-4zM14 5h1v1h-1zM1 6h3v1h-3zM7 6h2v1h-2zM13 6h2v1h-2zM1 7h4v1h-4zM6 7h2v1h-2zM10 7h1v1h-1zM13 7h2v1h-2zM1 8h3v1h-3zM7 8h1v1h-1zM9 8h3v1h-3zM13 8h2v1h-2zM1 9h4v1h-4zM6 9h2v1h-2zM10 9h1v1h-1zM13 9h2v1h-2zM1 10h8v1h-8zM12 10h3v1h-3zM2 11h12v1h-12z" fill="url(#dith)"/><path d="M1 0h14v1h-14zM0 1h2v1h-2zM14 1h2v1h-2zM0 2h1v1h-1zM4 2h3v1h-3zM15 2h1v1h-1zM0 3h1v1h-1zM3 3h2v1h-2zM6 3h2v1h-2zM11 3h3v1h-3zM15 3h1v1h-1zM0 4h1v1h-1zM3 4h1v1h-1zM7 4h1v1h-1zM12 4h2v1h-2zM15 4h1v1h-1zM0 5h1v1h-1zM3 5h2v1h-2zM6 5h2v1h-2zM12 5h2v1h-2zM15 5h1v1h-1zM0 6h1v1h-1zM4 6h3v1h-3zM9 6h4v1h-4zM15 6h1v1h-1zM0 7h1v1h-1zM5 7h1v1h-1zM8 7h2v1h-2zM11 7h2v1h-2zM15 7h1v1h-1zM0 8h1v1h-1zM4 8h3v1h-3zM8 8h1v1h-1zM12 8h1v1h-1zM15 8h1v1h-1zM0 9h1v1h-1zM5 9h1v1h-1zM8 9h2v1h-2zM11 9h2v1h-2zM15 9h1v1h-1zM0 10h1v1h-1zM9 10h3v1h-3zM15 10h1v1h-1zM0 11h2v1h-2zM14 11h2v1h-2zM1 12h14v1h-14z" fill="#000000"/></svg><div style="position:absolute;left:50px;top:187px;white-space:pre;font-family:'Liberation Sans', sans-serif;font-size:12px;line-height:12px;color:#000;font-weight:normal;transform:scaleX(0.954);transform-origin:0 0;">Events</div><div style="position:absolute;left:37px;top:212px;width:11px;height:1px;background-image:linear-gradient(to right,#7a7a7a 50%,transparent 50%);background-size:2px 1px;"></div><svg style="position:absolute;left:48px;top:204px" width="16" height="13" viewBox="0 0 16 13" shape-rendering="crispEdges"><path d="M2 1h12v1h-12zM1 2h14v1h-14zM1 3h14v1h-14zM1 4h14v1h-14zM1 5h14v1h-14zM1 6h14v1h-14zM1 7h14v1h-14zM1 8h14v1h-14zM1 9h14v1h-14zM1 10h14v1h-14zM2 11h12v1h-12z" fill="url(#dith)"/><path d="M1 0h14v1h-14zM0 1h2v1h-2zM14 1h2v1h-2zM0 2h1v1h-1zM15 2h1v1h-1zM0 3h1v1h-1zM15 3h1v1h-1zM0 4h1v1h-1zM15 4h1v1h-1zM0 5h1v1h-1zM15 5h1v1h-1zM0 6h1v1h-1zM15 6h1v1h-1zM0 7h1v1h-1zM15 7h1v1h-1zM0 8h1v1h-1zM15 8h1v1h-1zM0 9h1v1h-1zM15 9h1v1h-1zM0 10h1v1h-1zM15 10h1v1h-1zM0 11h2v1h-2zM14 11h2v1h-2zM1 12h14v1h-14z" fill="#000000"/></svg><div style="position:absolute;left:69px;top:205px;white-space:pre;font-family:'Liberation Sans', sans-serif;font-size:12px;line-height:12px;color:#000;font-weight:normal;transform:scaleX(0.9299);transform-origin:0 0;">VNZ 2x2 swiss</div><div style="position:absolute;left:37px;top:230px;width:11px;height:1px;background-image:linear-gradient(to right,#7a7a7a 50%,transparent 50%);background-size:2px 1px;"></div><svg style="position:absolute;left:48px;top:222px" width="16" height="13" viewBox="0 0 16 13" shape-rendering="crispEdges"><path d="M2 1h12v1h-12zM1 2h14v1h-14zM1 3h7v1h-7zM10 3h5v1h-5zM1 4h8v1h-8zM11 4h4v1h-4zM1 5h2v1h-2zM12 5h3v1h-3zM1 6h3v1h-3zM13 6h2v1h-2zM1 7h2v1h-2zM12 7h3v1h-3zM1 8h8v1h-8zM11 8h4v1h-4zM1 9h7v1h-7zM10 9h5v1h-5zM1 10h14v1h-14zM2 11h12v1h-12z" fill="#ff0000"/><path d="M1 0h14v1h-14zM0 1h2v1h-2zM14 1h2v1h-2zM0 2h1v1h-1zM15 2h1v1h-1zM0 3h1v1h-1zM8 3h2v1h-2zM15 3h1v1h-1zM0 4h1v1h-1zM9 4h2v1h-2zM15 4h1v1h-1zM0 5h1v1h-1zM3 5h9v1h-9zM15 5h1v1h-1zM0 6h1v1h-1zM4 6h9v1h-9zM15 6h1v1h-1zM0 7h1v1h-1zM3 7h9v1h-9zM15 7h1v1h-1zM0 8h1v1h-1zM9 8h2v1h-2zM15 8h1v1h-1zM0 9h1v1h-1zM8 9h2v1h-2zM15 9h1v1h-1zM0 10h1v1h-1zM15 10h1v1h-1zM0 11h2v1h-2zM14 11h2v1h-2zM1 12h14v1h-14z" fill="#000000"/></svg><div style="position:absolute;left:67px;top:220px;width:63px;height:18px;background:#3399ff;"></div><div style="position:absolute;left:67px;top:220px;width:63px;height:1px;background:repeating-linear-gradient(to right,#1a1a1a 0px,#1a1a1a 1px,#e07010 1px,#e07010 2px);"></div><div style="position:absolute;left:67px;top:237px;width:63px;height:1px;background:repeating-linear-gradient(to right,#1a1a1a 0px,#1a1a1a 1px,#e07010 1px,#e07010 2px);"></div><div style="position:absolute;left:67px;top:220px;width:1px;height:18px;background:repeating-linear-gradient(to bottom,#1a1a1a 0px,#1a1a1a 1px,#e07010 1px,#e07010 2px);"></div><div style="position:absolute;left:129px;top:220px;width:1px;height:18px;background:repeating-linear-gradient(to bottom,#1a1a1a 0px,#1a1a1a 1px,#e07010 1px,#e07010 2px);"></div><div style="position:absolute;left:69px;top:223px;white-space:pre;font-family:'Liberation Sans', sans-serif;font-size:12px;line-height:12px;color:#fff;font-weight:normal;transform:scaleX(0.9393);transform-origin:0 0;">VNZ 2x2 ko</div><div style="position:absolute;left:18px;top:248px;width:11px;height:1px;background-image:linear-gradient(to right,#7a7a7a 50%,transparent 50%);background-size:2px 1px;"></div><div style="position:absolute;left:14px;top:244px;width:9px;height:9px;border:1px solid #8a8a8a;background:#fff;"></div><div style="position:absolute;left:16px;top:248px;width:5px;height:1px;background:#000;"></div><svg style="position:absolute;left:29px;top:240px" width="16" height="13" viewBox="0 0 16 13" shape-rendering="crispEdges"><path d="M2 1h12v1h-12zM1 2h3v1h-3zM6 2h4v1h-4zM12 2h3v1h-3zM1 3h2v1h-2zM4 3h2v1h-2zM7 3h2v1h-2zM10 3h2v1h-2zM13 3h2v1h-2zM1 4h2v1h-2zM4 4h2v1h-2zM7 4h2v1h-2zM10 4h2v1h-2zM13 4h2v1h-2zM1 5h3v1h-3zM6 5h4v1h-4zM12 5h3v1h-3zM1 6h1v1h-1zM14 6h1v1h-1zM1 7h3v1h-3zM6 7h4v1h-4zM12 7h3v1h-3zM1 8h3v1h-3zM6 8h4v1h-4zM12 8h3v1h-3zM1 9h2v1h-2zM4 9h2v1h-2zM7 9h2v1h-2zM10 9h2v1h-2zM13 9h2v1h-2zM1 10h2v1h-2zM4 10h2v1h-2zM7 10h2v1h-2zM10 10h2v1h-2zM13 10h2v1h-2zM2 11h12v1h-12z" fill="url(#dith)"/><path d="M1 0h14v1h-14zM0 1h2v1h-2zM14 1h2v1h-2zM0 2h1v1h-1zM4 2h2v1h-2zM10 2h2v1h-2zM15 2h1v1h-1zM0 3h1v1h-1zM3 3h1v1h-1zM6 3h1v1h-1zM9 3h1v1h-1zM12 3h1v1h-1zM15 3h1v1h-1zM0 4h1v1h-1zM3 4h1v1h-1zM6 4h1v1h-1zM9 4h1v1h-1zM12 4h1v1h-1zM15 4h1v1h-1zM0 5h1v1h-1zM4 5h2v1h-2zM10 5h2v1h-2zM15 5h1v1h-1zM0 6h1v1h-1zM2 6h12v1h-12zM15 6h1v1h-1zM0 7h1v1h-1zM4 7h2v1h-2zM10 7h2v1h-2zM15 7h1v1h-1zM0 8h1v1h-1zM4 8h2v1h-2zM10 8h2v1h-2zM15 8h1v1h-1zM0 9h1v1h-1zM3 9h1v1h-1zM6 9h1v1h-1zM9 9h1v1h-1zM12 9h1v1h-1zM15 9h1v1h-1zM0 10h1v1h-1zM3 10h1v1h-1zM6 10h1v1h-1zM9 10h1v1h-1zM12 10h1v1h-1zM15 10h1v1h-1zM0 11h2v1h-2zM14 11h2v1h-2zM1 12h14v1h-14z" fill="#000000"/></svg><div style="position:absolute;left:50px;top:241px;white-space:pre;font-family:'Liberation Sans', sans-serif;font-size:12px;line-height:12px;color:#000;font-weight:normal;transform:scaleX(0.9529);transform-origin:0 0;">Entries</div><div style="position:absolute;left:37px;top:266px;width:11px;height:1px;background-image:linear-gradient(to right,#7a7a7a 50%,transparent 50%);background-size:2px 1px;"></div><svg style="position:absolute;left:48px;top:258px" width="16" height="13" viewBox="0 0 16 13" shape-rendering="crispEdges"><path d="M2 1h12v1h-12zM1 2h14v1h-14zM1 3h14v1h-14zM1 4h14v1h-14zM1 5h14v1h-14zM1 6h14v1h-14zM1 7h14v1h-14zM1 8h14v1h-14zM1 9h14v1h-14zM1 10h14v1h-14zM2 11h12v1h-12z" fill="url(#dith)"/><path d="M1 0h14v1h-14zM0 1h2v1h-2zM14 1h2v1h-2zM0 2h1v1h-1zM15 2h1v1h-1zM0 3h1v1h-1zM15 3h1v1h-1zM0 4h1v1h-1zM15 4h1v1h-1zM0 5h1v1h-1zM15 5h1v1h-1zM0 6h1v1h-1zM15 6h1v1h-1zM0 7h1v1h-1zM15 7h1v1h-1zM0 8h1v1h-1zM15 8h1v1h-1zM0 9h1v1h-1zM15 9h1v1h-1zM0 10h1v1h-1zM15 10h1v1h-1zM0 11h2v1h-2zM14 11h2v1h-2zM1 12h14v1h-14z" fill="#000000"/></svg><div style="position:absolute;left:69px;top:259px;white-space:pre;font-family:'Liberation Sans', sans-serif;font-size:12px;line-height:12px;color:#000;font-weight:normal;transform:scaleX(0.9299);transform-origin:0 0;">VNZ 2x2 swiss</div><div style="position:absolute;left:37px;top:284px;width:11px;height:1px;background-image:linear-gradient(to right,#7a7a7a 50%,transparent 50%);background-size:2px 1px;"></div><svg style="position:absolute;left:48px;top:276px" width="16" height="13" viewBox="0 0 16 13" shape-rendering="crispEdges"><path d="M2 1h12v1h-12zM1 2h14v1h-14zM1 3h14v1h-14zM1 4h14v1h-14zM1 5h14v1h-14zM1 6h14v1h-14zM1 7h14v1h-14zM1 8h14v1h-14zM1 9h14v1h-14zM1 10h14v1h-14zM2 11h12v1h-12z" fill="#ffffff"/><path d="M1 0h14v1h-14zM0 1h2v1h-2zM14 1h2v1h-2zM0 2h1v1h-1zM15 2h1v1h-1zM0 3h1v1h-1zM15 3h1v1h-1zM0 4h1v1h-1zM15 4h1v1h-1zM0 5h1v1h-1zM15 5h1v1h-1zM0 6h1v1h-1zM15 6h1v1h-1zM0 7h1v1h-1zM15 7h1v1h-1zM0 8h1v1h-1zM15 8h1v1h-1zM0 9h1v1h-1zM15 9h1v1h-1zM0 10h1v1h-1zM15 10h1v1h-1zM0 11h2v1h-2zM14 11h2v1h-2zM1 12h14v1h-14z" fill="#000000"/></svg><div style="position:absolute;left:69px;top:277px;white-space:pre;font-family:'Liberation Sans', sans-serif;font-size:12px;line-height:12px;color:#000;font-weight:normal;transform:scaleX(0.9393);transform-origin:0 0;">VNZ 2x2 ko</div><div style="position:absolute;left:18px;top:302px;width:11px;height:1px;background-image:linear-gradient(to right,#7a7a7a 50%,transparent 50%);background-size:2px 1px;"></div><div style="position:absolute;left:14px;top:298px;width:9px;height:9px;border:1px solid #8a8a8a;background:#fff;"></div><div style="position:absolute;left:16px;top:302px;width:5px;height:1px;background:#000;"></div><div style="position:absolute;left:18px;top:300px;width:1px;height:5px;background:#000;"></div><svg style="position:absolute;left:29px;top:294px" width="16" height="13" viewBox="0 0 16 13" shape-rendering="crispEdges"><path d="M2 1h12v1h-12zM1 2h3v1h-3zM6 2h9v1h-9zM1 3h3v1h-3zM10 3h5v1h-5zM1 4h3v1h-3zM6 4h3v1h-3zM13 4h2v1h-2zM1 5h3v1h-3zM6 5h6v1h-6zM13 5h2v1h-2zM1 6h3v1h-3zM6 6h6v1h-6zM13 6h2v1h-2zM1 7h3v1h-3zM10 7h2v1h-2zM13 7h2v1h-2zM1 8h3v1h-3zM6 8h3v1h-3zM13 8h2v1h-2zM1 9h3v1h-3zM6 9h9v1h-9zM1 10h3v1h-3zM6 10h9v1h-9zM2 11h12v1h-12z" fill="url(#dith)"/><path d="M1 0h14v1h-14zM0 1h2v1h-2zM14 1h2v1h-2zM0 2h1v1h-1zM4 2h2v1h-2zM15 2h1v1h-1zM0 3h1v1h-1zM4 3h6v1h-6zM15 3h1v1h-1zM0 4h1v1h-1zM4 4h2v1h-2zM9 4h4v1h-4zM15 4h1v1h-1zM0 5h1v1h-1zM4 5h2v1h-2zM12 5h1v1h-1zM15 5h1v1h-1zM0 6h1v1h-1zM4 6h2v1h-2zM12 6h1v1h-1zM15 6h1v1h-1zM0 7h1v1h-1zM4 7h6v1h-6zM12 7h1v1h-1zM15 7h1v1h-1zM0 8h1v1h-1zM4 8h2v1h-2zM9 8h4v1h-4zM15 8h1v1h-1zM0 9h1v1h-1zM4 9h2v1h-2zM15 9h1v1h-1zM0 10h1v1h-1zM4 10h2v1h-2zM15 10h1v1h-1zM0 11h2v1h-2zM14 11h2v1h-2zM1 12h14v1h-14z" fill="#000000"/></svg><div style="position:absolute;left:50px;top:295px;white-space:pre;font-family:'Liberation Sans', sans-serif;font-size:12px;line-height:12px;color:#000;font-weight:normal;transform:scaleX(0.9906);transform-origin:0 0;">Clubs</div><div style="position:absolute;left:18px;top:320px;width:11px;height:1px;background-image:linear-gradient(to right,#7a7a7a 50%,transparent 50%);background-size:2px 1px;"></div><div style="position:absolute;left:14px;top:316px;width:9px;height:9px;border:1px solid #8a8a8a;background:#fff;"></div><div style="position:absolute;left:16px;top:320px;width:5px;height:1px;background:#000;"></div><div style="position:absolute;left:18px;top:318px;width:1px;height:5px;background:#000;"></div><svg style="position:absolute;left:29px;top:312px" width="16" height="13" viewBox="0 0 16 13" shape-rendering="crispEdges"><path d="M2 1h12v1h-12zM1 2h6v1h-6zM9 2h6v1h-6zM1 3h5v1h-5zM7 3h2v1h-2zM10 3h5v1h-5zM1 4h2v1h-2zM4 4h2v1h-2zM7 4h2v1h-2zM10 4h2v1h-2zM13 4h2v1h-2zM1 5h2v1h-2zM5 5h2v1h-2zM9 5h2v1h-2zM13 5h2v1h-2zM1 6h4v1h-4zM11 6h4v1h-4zM1 7h6v1h-6zM9 7h6v1h-6zM1 8h6v1h-6zM9 8h6v1h-6zM1 9h5v1h-5zM10 9h5v1h-5zM1 10h4v1h-4zM7 10h2v1h-2zM11 10h4v1h-4zM2 11h12v1h-12z" fill="url(#dith)"/><path d="M1 0h14v1h-14zM0 1h2v1h-2zM14 1h2v1h-2zM0 2h1v1h-1zM7 2h2v1h-2zM15 2h1v1h-1zM0 3h1v1h-1zM6 3h1v1h-1zM9 3h1v1h-1zM15 3h1v1h-1zM0 4h1v1h-1zM3 4h1v1h-1zM6 4h1v1h-1zM9 4h1v1h-1zM12 4h1v1h-1zM15 4h1v1h-1zM0 5h1v1h-1zM3 5h2v1h-2zM7 5h2v1h-2zM11 5h2v1h-2zM15 5h1v1h-1zM0 6h1v1h-1zM5 6h6v1h-6zM15 6h1v1h-1zM0 7h1v1h-1zM7 7h2v1h-2zM15 7h1v1h-1zM0 8h1v1h-1zM7 8h2v1h-2zM15 8h1v1h-1zM0 9h1v1h-1zM6 9h4v1h-4zM15 9h1v1h-1zM0 10h1v1h-1zM5 10h2v1h-2zM9 10h2v1h-2zM15 10h1v1h-1zM0 11h2v1h-2zM14 11h2v1h-2zM1 12h14v1h-14z" fill="#000000"/></svg><div style="position:absolute;left:50px;top:313px;white-space:pre;font-family:'Liberation Sans', sans-serif;font-size:12px;line-height:12px;color:#000;font-weight:normal;transform:scaleX(0.9346);transform-origin:0 0;">Players</div><div style="position:absolute;left:18px;top:338px;width:11px;height:1px;background-image:linear-gradient(to right,#7a7a7a 50%,transparent 50%);background-size:2px 1px;"></div><svg style="position:absolute;left:29px;top:330px" width="16" height="13" viewBox="0 0 16 13" shape-rendering="crispEdges"><path d="M2 1h12v1h-12zM1 2h10v1h-10zM13 2h2v1h-2zM1 3h8v1h-8zM13 3h2v1h-2zM1 4h7v1h-7zM12 4h3v1h-3zM1 5h6v1h-6zM11 5h4v1h-4zM1 6h5v1h-5zM10 6h5v1h-5zM1 7h4v1h-4zM9 7h6v1h-6zM1 8h2v1h-2zM8 8h7v1h-7zM1 9h2v1h-2zM6 9h9v1h-9zM1 10h3v1h-3zM5 10h10v1h-10zM2 11h12v1h-12z" fill="url(#dith)"/><path d="M10 3h1v1h-1zM9 4h1v1h-1zM8 5h1v1h-1zM7 6h1v1h-1z" fill="#ffff00"/><path d="M1 0h14v1h-14zM0 1h2v1h-2zM14 1h2v1h-2zM0 2h1v1h-1zM11 2h2v1h-2zM15 2h1v1h-1zM0 3h1v1h-1zM9 3h1v1h-1zM11 3h2v1h-2zM15 3h1v1h-1zM0 4h1v1h-1zM8 4h1v1h-1zM10 4h2v1h-2zM15 4h1v1h-1zM0 5h1v1h-1zM7 5h1v1h-1zM9 5h2v1h-2zM15 5h1v1h-1zM0 6h1v1h-1zM6 6h1v1h-1zM8 6h2v1h-2zM15 6h1v1h-1zM0 7h1v1h-1zM5 7h4v1h-4zM15 7h1v1h-1zM0 8h1v1h-1zM3 8h5v1h-5zM15 8h1v1h-1zM0 9h1v1h-1zM3 9h3v1h-3zM15 9h1v1h-1zM0 10h1v1h-1zM4 10h1v1h-1zM15 10h1v1h-1zM0 11h2v1h-2zM14 11h2v1h-2zM1 12h14v1h-14z" fill="#000000"/></svg><div style="position:absolute;left:50px;top:331px;white-space:pre;font-family:'Liberation Sans', sans-serif;font-size:12px;line-height:12px;color:#000;font-weight:normal;transform:scaleX(0.9344);transform-origin:0 0;">Referee</div><div style="position:absolute;left:18px;top:356px;width:11px;height:1px;background-image:linear-gradient(to right,#7a7a7a 50%,transparent 50%);background-size:2px 1px;"></div><svg style="position:absolute;left:29px;top:348px" width="16" height="13" viewBox="0 0 16 13" shape-rendering="crispEdges"><path d="M2 1h12v1h-12zM1 2h7v1h-7zM13 2h2v1h-2zM1 3h5v1h-5zM7 3h5v1h-5zM13 3h2v1h-2zM1 4h5v1h-5zM7 4h5v1h-5zM13 4h2v1h-2zM1 5h4v1h-4zM6 5h5v1h-5zM12 5h3v1h-3zM1 6h4v1h-4zM12 6h3v1h-3zM1 7h3v1h-3zM5 7h5v1h-5zM11 7h4v1h-4zM1 8h3v1h-3zM5 8h5v1h-5zM11 8h4v1h-4zM1 9h2v1h-2zM4 9h5v1h-5zM10 9h5v1h-5zM1 10h2v1h-2zM10 10h5v1h-5zM2 11h12v1h-12z" fill="url(#dith)"/><path d="M1 0h14v1h-14zM0 1h2v1h-2zM14 1h2v1h-2zM0 2h1v1h-1zM8 2h5v1h-5zM15 2h1v1h-1zM0 3h1v1h-1zM6 3h1v1h-1zM12 3h1v1h-1zM15 3h1v1h-1zM0 4h1v1h-1zM6 4h1v1h-1zM12 4h1v1h-1zM15 4h1v1h-1zM0 5h1v1h-1zM5 5h1v1h-1zM11 5h1v1h-1zM15 5h1v1h-1zM0 6h1v1h-1zM5 6h7v1h-7zM15 6h1v1h-1zM0 7h1v1h-1zM4 7h1v1h-1zM10 7h1v1h-1zM15 7h1v1h-1zM0 8h1v1h-1zM4 8h1v1h-1zM10 8h1v1h-1zM15 8h1v1h-1zM0 9h1v1h-1zM3 9h1v1h-1zM9 9h1v1h-1zM15 9h1v1h-1zM0 10h1v1h-1zM3 10h7v1h-7zM15 10h1v1h-1zM0 11h2v1h-2zM14 11h2v1h-2zM1 12h14v1h-14z" fill="#000000"/></svg><div style="position:absolute;left:50px;top:349px;white-space:pre;font-family:'Liberation Sans', sans-serif;font-size:12px;line-height:12px;color:#000;font-weight:normal;transform:scaleX(1.0073);transform-origin:0 0;">Courts</div><div style="position:absolute;left:18px;top:374px;width:11px;height:1px;background-image:linear-gradient(to right,#7a7a7a 50%,transparent 50%);background-size:2px 1px;"></div><div style="position:absolute;left:14px;top:370px;width:9px;height:9px;border:1px solid #8a8a8a;background:#fff;"></div><div style="position:absolute;left:16px;top:374px;width:5px;height:1px;background:#000;"></div><div style="position:absolute;left:18px;top:372px;width:1px;height:5px;background:#000;"></div><svg style="position:absolute;left:29px;top:366px" width="16" height="13" viewBox="0 0 16 13" shape-rendering="crispEdges"><path d="M2 1h12v1h-12zM1 2h14v1h-14zM1 3h8v1h-8zM12 3h3v1h-3zM1 4h5v1h-5zM9 4h3v1h-3zM13 4h2v1h-2zM1 5h2v1h-2zM7 5h1v1h-1zM9 5h3v1h-3zM13 5h2v1h-2zM1 6h1v1h-1zM3 6h3v1h-3zM7 6h2v1h-2zM10 6h2v1h-2zM13 6h2v1h-2zM1 7h1v1h-1zM3 7h3v1h-3zM7 7h3v1h-3zM12 7h3v1h-3zM1 8h1v1h-1zM3 8h3v1h-3zM10 8h5v1h-5zM1 9h2v1h-2zM6 9h9v1h-9zM1 10h14v1h-14zM2 11h12v1h-12z" fill="url(#dith)"/><path d="M1 0h14v1h-14zM0 1h2v1h-2zM14 1h2v1h-2zM0 2h1v1h-1zM15 2h1v1h-1zM0 3h1v1h-1zM9 3h3v1h-3zM15 3h1v1h-1zM0 4h1v1h-1zM6 4h3v1h-3zM12 4h1v1h-1zM15 4h1v1h-1zM0 5h1v1h-1zM3 5h4v1h-4zM8 5h1v1h-1zM12 5h1v1h-1zM15 5h1v1h-1zM0 6h1v1h-1zM2 6h1v1h-1zM6 6h1v1h-1zM9 6h1v1h-1zM12 6h1v1h-1zM15 6h1v1h-1zM0 7h1v1h-1zM2 7h1v1h-1zM6 7h1v1h-1zM10 7h2v1h-2zM15 7h1v1h-1zM0 8h1v1h-1zM2 8h1v1h-1zM6 8h4v1h-4zM15 8h1v1h-1zM0 9h1v1h-1zM3 9h3v1h-3zM15 9h1v1h-1zM0 10h1v1h-1zM15 10h1v1h-1zM0 11h2v1h-2zM14 11h2v1h-2zM1 12h14v1h-14z" fill="#000000"/></svg><div style="position:absolute;left:50px;top:367px;white-space:pre;font-family:'Liberation Sans', sans-serif;font-size:12px;line-height:12px;color:#000;font-weight:normal;transform:scaleX(0.9587);transform-origin:0 0;">Entry fees</div><div style="position:absolute;left:18px;top:392px;width:11px;height:1px;background-image:linear-gradient(to right,#7a7a7a 50%,transparent 50%);background-size:2px 1px;"></div><svg style="position:absolute;left:29px;top:384px" width="16" height="13" viewBox="0 0 16 13" shape-rendering="crispEdges"><path d="M2 1h12v1h-12zM1 2h3v1h-3zM13 2h2v1h-2zM1 3h3v1h-3zM5 3h7v1h-7zM13 3h2v1h-2zM1 4h3v1h-3zM5 4h1v1h-1zM10 4h2v1h-2zM13 4h2v1h-2zM1 5h3v1h-3zM5 5h7v1h-7zM13 5h2v1h-2zM1 6h3v1h-3zM5 6h1v1h-1zM10 6h2v1h-2zM13 6h2v1h-2zM1 7h3v1h-3zM5 7h7v1h-7zM13 7h2v1h-2zM1 8h3v1h-3zM8 8h1v1h-1zM10 8h2v1h-2zM13 8h2v1h-2zM1 9h6v1h-6zM8 9h4v1h-4zM13 9h2v1h-2zM1 10h6v1h-6zM13 10h2v1h-2zM2 11h12v1h-12z" fill="url(#dith)"/><path d="M1 0h14v1h-14zM0 1h2v1h-2zM14 1h2v1h-2zM0 2h1v1h-1zM4 2h9v1h-9zM15 2h1v1h-1zM0 3h1v1h-1zM4 3h1v1h-1zM12 3h1v1h-1zM15 3h1v1h-1zM0 4h1v1h-1zM4 4h1v1h-1zM6 4h4v1h-4zM12 4h1v1h-1zM15 4h1v1h-1zM0 5h1v1h-1zM4 5h1v1h-1zM12 5h1v1h-1zM15 5h1v1h-1zM0 6h1v1h-1zM4 6h1v1h-1zM6 6h4v1h-4zM12 6h1v1h-1zM15 6h1v1h-1zM0 7h1v1h-1zM4 7h1v1h-1zM12 7h1v1h-1zM15 7h1v1h-1zM0 8h1v1h-1zM4 8h4v1h-4zM9 8h1v1h-1zM12 8h1v1h-1zM15 8h1v1h-1zM0 9h1v1h-1zM7 9h1v1h-1zM12 9h1v1h-1zM15 9h1v1h-1zM0 10h1v1h-1zM7 10h6v1h-6zM15 10h1v1h-1zM0 11h2v1h-2zM14 11h2v1h-2zM1 12h14v1h-14z" fill="#000000"/></svg><div style="position:absolute;left:50px;top:385px;white-space:pre;font-family:'Liberation Sans', sans-serif;font-size:12px;line-height:12px;color:#000;font-weight:normal;transform:scaleX(1.0237);transform-origin:0 0;">Tournament data</div>
<div style="position:absolute;left:167px;top:112px;width:361px;height:25px;background:#000;"></div><div style="position:absolute;left:169px;top:114px;width:177px;height:20px;background:#f0f0f0;border:1px solid #fff;"></div><div style="position:absolute;left:349px;top:112px;width:179px;height:25px;background:#000;"></div><div style="position:absolute;left:351px;top:114px;width:174px;height:20px;background:#f0f0f0;border:1px solid #fff;"></div><div style="position:absolute;left:237px;top:117px;white-space:pre;font-family:'Liberation Sans', sans-serif;font-size:16px;line-height:16px;color:#000;font-weight:bold;transform:scaleX(1.0303);transform-origin:0 0;">Event</div><div style="position:absolute;left:167px;top:137px;width:181px;height:22px;background:#fff;"></div><div style="position:absolute;left:349px;top:137px;width:178px;height:22px;background:#c0ffc0;"></div><div style="position:absolute;left:167px;top:159px;width:361px;height:1px;background:#707070;"></div><div style="position:absolute;left:171px;top:139px;white-space:pre;font-family:'Liberation Sans', sans-serif;font-size:16px;line-height:16px;color:#000;font-weight:normal;transform:scaleX(0.9956);transform-origin:0 0;">Name</div><div style="position:absolute;left:353px;top:139px;white-space:pre;font-family:'Liberation Sans', sans-serif;font-size:16px;line-height:16px;color:#000;font-weight:bold;transform:scaleX(1.0027);transform-origin:0 0;">VNZ 2x2 ko</div><div style="position:absolute;left:167px;top:160px;width:181px;height:22px;background:#fff;"></div><div style="position:absolute;left:349px;top:160px;width:178px;height:22px;background:#c0ffc0;"></div><div style="position:absolute;left:167px;top:182px;width:361px;height:1px;background:#707070;"></div><div style="position:absolute;left:171px;top:162px;white-space:pre;font-family:'Liberation Sans', sans-serif;font-size:16px;line-height:16px;color:#000;font-weight:normal;transform:scaleX(0.9683);transform-origin:0 0;">Players per entry</div><div style="position:absolute;left:353px;top:162px;white-space:pre;font-family:'Liberation Sans', sans-serif;font-size:16px;line-height:16px;color:#000;font-weight:normal;">2</div><div style="position:absolute;left:167px;top:183px;width:181px;height:22px;background:#fff;"></div><div style="position:absolute;left:349px;top:183px;width:178px;height:22px;background:#c0ffc0;"></div><div style="position:absolute;left:167px;top:205px;width:361px;height:1px;background:#707070;"></div><div style="position:absolute;left:171px;top:185px;white-space:pre;font-family:'Liberation Sans', sans-serif;font-size:16px;line-height:16px;color:#000;font-weight:normal;transform:scaleX(0.9911);transform-origin:0 0;">Gender</div><div style="position:absolute;left:353px;top:185px;white-space:pre;font-family:'Liberation Sans', sans-serif;font-size:16px;line-height:16px;color:#000;font-weight:normal;transform:scaleX(0.9609);transform-origin:0 0;">Any</div><div style="position:absolute;left:167px;top:206px;width:181px;height:22px;background:#fff;"></div><div style="position:absolute;left:349px;top:206px;width:178px;height:22px;background:#c0ffc0;"></div><div style="position:absolute;left:167px;top:228px;width:361px;height:1px;background:#707070;"></div><div style="position:absolute;left:171px;top:208px;white-space:pre;font-family:'Liberation Sans', sans-serif;font-size:16px;line-height:16px;color:#000;font-weight:normal;transform:scaleX(0.9713);transform-origin:0 0;">Tournament system</div><div style="position:absolute;left:353px;top:208px;white-space:pre;font-family:'Liberation Sans', sans-serif;font-size:16px;line-height:16px;color:#000;font-weight:normal;transform:scaleX(0.9769);transform-origin:0 0;">Elimination system</div><div style="position:absolute;left:167px;top:229px;width:181px;height:22px;background:#fff;"></div><div style="position:absolute;left:349px;top:229px;width:178px;height:22px;background:#c0ffc0;"></div><div style="position:absolute;left:167px;top:251px;width:361px;height:1px;background:#707070;"></div><div style="position:absolute;left:171px;top:231px;white-space:pre;font-family:'Liberation Sans', sans-serif;font-size:16px;line-height:16px;color:#000;font-weight:normal;transform:scaleX(0.9885);transform-origin:0 0;">Points per set</div><div style="position:absolute;left:353px;top:231px;white-space:pre;font-family:'Liberation Sans', sans-serif;font-size:16px;line-height:16px;color:#000;font-weight:normal;transform:scaleX(1.0283);transform-origin:0 0;">99</div><div style="position:absolute;left:167px;top:252px;width:181px;height:22px;background:#fff;"></div><div style="position:absolute;left:349px;top:252px;width:178px;height:22px;background:#c0ffc0;"></div><div style="position:absolute;left:167px;top:274px;width:361px;height:1px;background:#707070;"></div><div style="position:absolute;left:171px;top:254px;white-space:pre;font-family:'Liberation Sans', sans-serif;font-size:16px;line-height:16px;color:#000;font-weight:normal;transform:scaleX(0.9948);transform-origin:0 0;">Seed Mode (Elimination)</div><div style="position:absolute;left:353px;top:254px;white-space:pre;font-family:'Liberation Sans', sans-serif;font-size:16px;line-height:16px;color:#000;font-weight:normal;transform:scaleX(0.9722);transform-origin:0 0;">Seed by strength</div><div style="position:absolute;left:167px;top:275px;width:181px;height:22px;background:#fff;"></div><div style="position:absolute;left:349px;top:275px;width:178px;height:22px;background:#c0ffc0;"></div><div style="position:absolute;left:167px;top:297px;width:361px;height:1px;background:#707070;"></div><div style="position:absolute;left:171px;top:277px;white-space:pre;font-family:'Liberation Sans', sans-serif;font-size:16px;line-height:16px;color:#000;font-weight:normal;transform:scaleX(0.962);transform-origin:0 0;">Entry fee</div><div style="position:absolute;left:353px;top:277px;white-space:pre;font-family:'Liberation Sans', sans-serif;font-size:16px;line-height:16px;color:#000;font-weight:normal;transform:scaleX(0.9891);transform-origin:0 0;">0.00</div><div style="position:absolute;left:167px;top:298px;width:181px;height:22px;background:#fff;"></div><div style="position:absolute;left:349px;top:298px;width:178px;height:22px;background:#c0ffc0;"></div><div style="position:absolute;left:167px;top:320px;width:361px;height:1px;background:#707070;"></div><div style="position:absolute;left:171px;top:300px;white-space:pre;font-family:'Liberation Sans', sans-serif;font-size:16px;line-height:16px;color:#000;font-weight:normal;transform:scaleX(0.998);transform-origin:0 0;">First Lane</div><div style="position:absolute;left:353px;top:300px;white-space:pre;font-family:'Liberation Sans', sans-serif;font-size:16px;line-height:16px;color:#000;font-weight:normal;">1</div><div style="position:absolute;left:167px;top:321px;width:181px;height:22px;background:#fff;"></div><div style="position:absolute;left:349px;top:321px;width:178px;height:22px;background:#c0ffc0;"></div><div style="position:absolute;left:167px;top:343px;width:361px;height:1px;background:#707070;"></div><div style="position:absolute;left:171px;top:323px;white-space:pre;font-family:'Liberation Sans', sans-serif;font-size:16px;line-height:16px;color:#000;font-weight:normal;transform:scaleX(0.9917);transform-origin:0 0;">Last Lane</div><div style="position:absolute;left:353px;top:323px;white-space:pre;font-family:'Liberation Sans', sans-serif;font-size:16px;line-height:16px;color:#000;font-weight:normal;">16</div><div style="position:absolute;left:167px;top:344px;width:181px;height:22px;background:#fff;"></div><div style="position:absolute;left:349px;top:344px;width:178px;height:22px;background:#fff;"></div><div style="position:absolute;left:167px;top:366px;width:361px;height:1px;background:#707070;"></div><div style="position:absolute;left:171px;top:346px;white-space:pre;font-family:'Liberation Sans', sans-serif;font-size:16px;line-height:16px;color:#000;font-weight:normal;transform:scaleX(1.0021);transform-origin:0 0;">Entries</div><div style="position:absolute;left:353px;top:346px;white-space:pre;font-family:'Liberation Sans', sans-serif;font-size:16px;line-height:16px;color:#000;font-weight:normal;">0</div><div style="position:absolute;left:167px;top:367px;width:181px;height:22px;background:#fff;"></div><div style="position:absolute;left:349px;top:367px;width:178px;height:22px;background:#fff;"></div><div style="position:absolute;left:167px;top:389px;width:361px;height:1px;background:#707070;"></div><div style="position:absolute;left:171px;top:369px;white-space:pre;font-family:'Liberation Sans', sans-serif;font-size:16px;line-height:16px;color:#000;font-weight:normal;transform:scaleX(1.0198);transform-origin:0 0;">State</div><div style="position:absolute;left:353px;top:369px;white-space:pre;font-family:'Liberation Sans', sans-serif;font-size:16px;line-height:16px;color:#000;font-weight:normal;transform:scaleX(0.9993);transform-origin:0 0;">Boarding</div><div style="position:absolute;left:167px;top:390px;width:181px;height:22px;background:#fff;"></div><div style="position:absolute;left:349px;top:390px;width:178px;height:22px;background:#c0ffc0;"></div><div style="position:absolute;left:167px;top:412px;width:361px;height:1px;background:#707070;"></div><div style="position:absolute;left:171px;top:392px;white-space:pre;font-family:'Liberation Sans', sans-serif;font-size:16px;line-height:16px;color:#000;font-weight:normal;transform:scaleX(0.9924);transform-origin:0 0;">Elimination mode</div><div style="position:absolute;left:353px;top:392px;white-space:pre;font-family:'Liberation Sans', sans-serif;font-size:16px;line-height:16px;color:#000;font-weight:normal;transform:scaleX(0.9852);transform-origin:0 0;">Single Elimination</div><div style="position:absolute;left:167px;top:413px;width:181px;height:22px;background:#fff;"></div><div style="position:absolute;left:349px;top:413px;width:178px;height:22px;background:#c0ffc0;"></div><div style="position:absolute;left:167px;top:435px;width:361px;height:1px;background:#707070;"></div><div style="position:absolute;left:171px;top:415px;white-space:pre;font-family:'Liberation Sans', sans-serif;font-size:16px;line-height:16px;color:#000;font-weight:normal;transform:scaleX(0.9742);transform-origin:0 0;">Play for 3. rank?</div><div style="position:absolute;left:353px;top:415px;white-space:pre;font-family:'Liberation Sans', sans-serif;font-size:16px;line-height:16px;color:#000;font-weight:normal;transform:scaleX(1.0035);transform-origin:0 0;">Yes</div><div style="position:absolute;left:348px;top:137px;width:1px;height:299px;background:#707070;"></div><div style="position:absolute;left:527px;top:137px;width:1px;height:299px;background:#707070;"></div>
<div style="position:absolute;left:758px;top:30px;width:6px;height:597px;background:#b9d1ea;"></div>
<div style="position:absolute;left:759px;top:74px;width:5px;height:46px;background:linear-gradient(to bottom,rgba(255,255,255,0) 0%,rgba(255,255,255,0.25) 50%,rgba(255,255,255,0.45) 100%);"></div>
<div style="position:absolute;left:764px;top:5px;width:1px;height:623px;background:linear-gradient(to bottom,#c4f2fc 0px,#8ce4fa 20px,#44d4f6 60px,#44d4f6 100%);"></div>
<div style="position:absolute;left:765px;top:0px;width:1px;height:629px;background:#000;"></div>
</body></html>
